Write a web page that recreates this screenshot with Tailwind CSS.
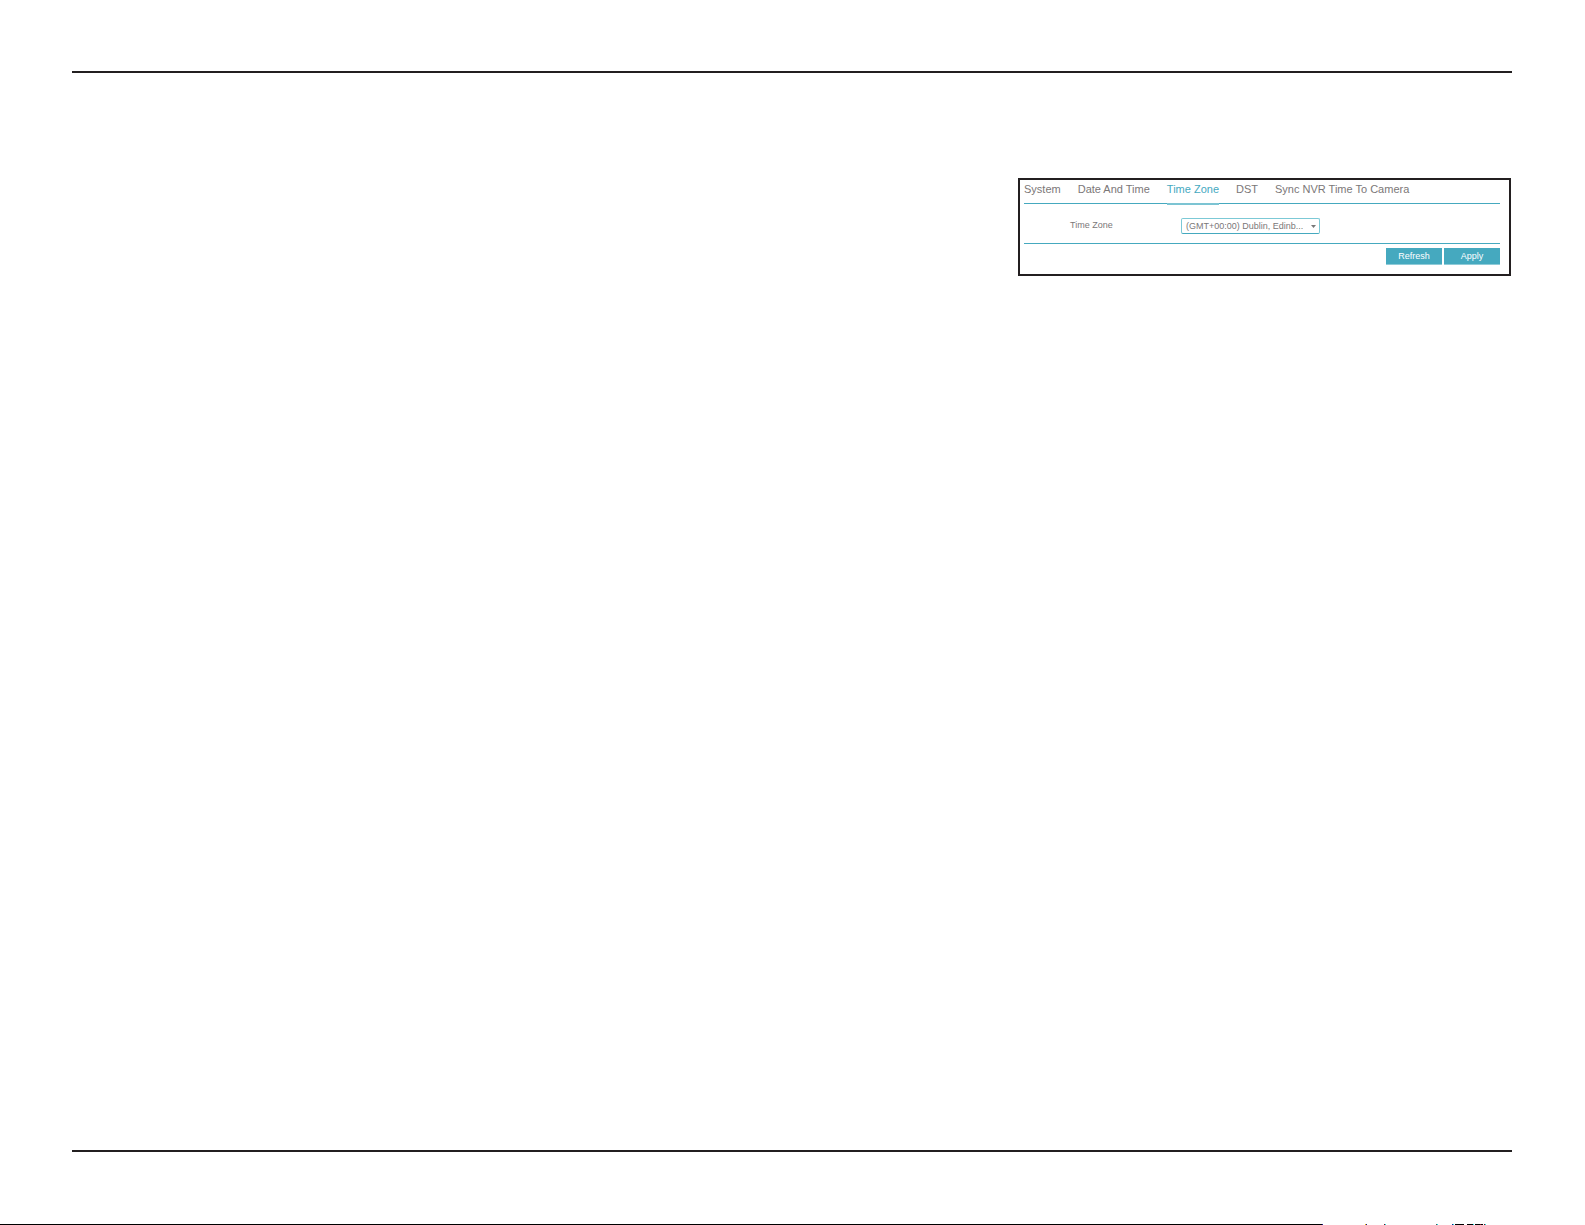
<!DOCTYPE html>
<html lang="en">
<head>
<meta charset="UTF-8">
<meta name="viewport" content="width=device-width, initial-scale=1.0">
<title>Time Zone</title>
<script src="https://cdn.jsdelivr.net/npm/@tailwindcss/browser@4"></script>
</head>
<body class="min-h-screen flex flex-col bg-white text-[#7b7778] font-['Liberation_Sans',Arial,sans-serif]">

<!-- Page body, between the two rules -->
<main class="grow flex flex-col ml-[72px] mt-[71px] mb-[72px] mr-[73px] border-y-2 border-[#231f20]">

  <!-- Settings panel -->
  <section class="self-end w-full max-w-[493px] mt-[105px] mr-px border-2 border-[#231f20] pl-1 pr-[9px] pb-[9px]">
    <nav class="flex gap-[17px] h-6 border-b border-[#45a9bf] text-[11px] leading-[18px] whitespace-nowrap">
      <a href="#system">System</a>
      <a href="#date">Date And Time</a>
      <a href="#timezone" class="h-[25px] border-b-2 border-[#7cc4d3] text-[#45a9bf]">Time Zone</a>
      <a href="#dst">DST</a>
      <a href="#sync">Sync NVR Time To Camera</a>
    </nav>

    <form id="timezone">
      <div class="flex items-center h-10 border-b border-[#45a9bf] pl-[46px] pt-[9px] pb-1 text-[9px]">
        <label for="zone" class="w-[111px]">Time Zone</label>
        <div class="relative">
          <select id="zone" class="appearance-none block w-[139px] h-4 pl-1 pr-4 rounded-xs border border-[#7cc9d6] border-b-[#45a9bf] bg-white text-[9px] leading-[14px]">
            <option>(GMT+00:00) Dublin, Edinb...</option>
          </select>
          <svg class="absolute right-1 top-[7px] w-[5px] h-[3px] pointer-events-none" viewBox="0 0 5 3" fill="#777"><path d="M0 0h5L2.5 3z"/></svg>
        </div>
      </div>
      <div class="flex justify-end gap-[2px] pt-1 text-[9px] leading-4 text-white">
        <button type="button" class="w-14 h-[17px] border-b border-[#8fcbd8] bg-[#45a9bf]">Refresh</button>
        <button type="button" class="w-14 h-[17px] border-b border-[#8fcbd8] bg-[#45a9bf]">Apply</button>
      </div>
    </form>
  </section>

</main>

<!-- Bottom edge strip -->
<footer>
  <svg class="block w-full h-px" viewBox="0 0 1585 1" preserveAspectRatio="none" shape-rendering="crispEdges">
    <path fill="#000" d="M0 0h1322v1H0zM1455 0h9v1h-9zM1467 0h6v1h-6zM1475 0h5v1h-5zM1481 0h2v1h-2z"/>
    <path fill="#1a1a8c" d="M1322 0h1v1h-1zM1366 0h1v1h-1zM1452 0h1v1h-1z"/>
    <path fill="#e8b400" d="M1365 0h1v1h-1z"/>
    <path fill="#7a1020" d="M1384 0h1v1h-1zM1480 0h1v1h-1zM1484 0h1v1h-1z"/>
    <path fill="#19e5e5" d="M1385 0h1v1h-1zM1437 0h1v1h-1zM1453 0h1v1h-1zM1473 0h1v1h-1zM1485 0h1v1h-1z"/>
    <path fill="#555" d="M1436 0h1v1h-1z"/>
  </svg>
</footer>

</body>
</html>
